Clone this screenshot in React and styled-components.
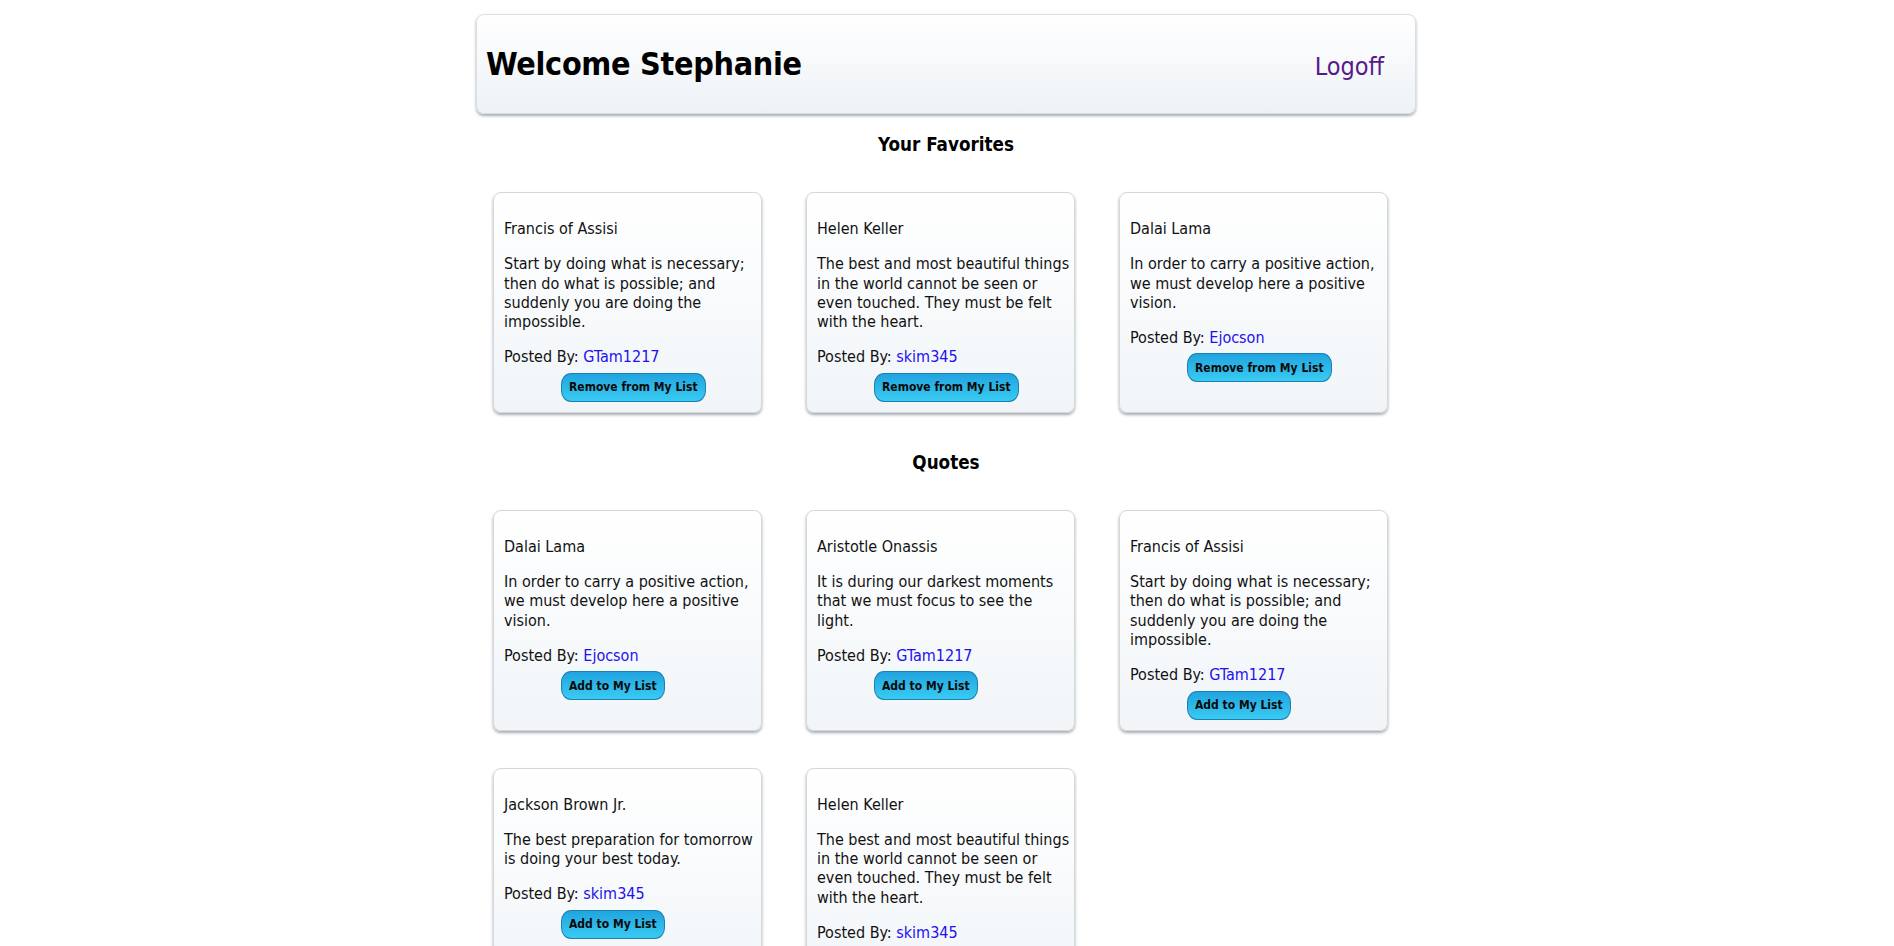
import React from "react";
import styled, { createGlobalStyle } from "styled-components";

const GlobalStyle = createGlobalStyle`
  body {
    margin: 0;
    background: #ffffff;
    color: #000000;
    font-family: "DejaVu Sans Condensed", "DejaVu Sans", sans-serif;
    font-stretch: condensed;
  }
`;

const Page = styled.div`
  width: 940px;
  margin: 0 auto;
  padding: 14px 2px 0 0;
`;

const Header = styled.header`
  box-sizing: border-box;
  height: 100px;
  display: flex;
  align-items: center;
  justify-content: space-between;
  padding: 0 31px 0 9px;
  border: 1px solid #d9dee3;
  border-radius: 8px;
  background: linear-gradient(#ffffff, #eef2f6);
  box-shadow: 0 2px 3px rgba(60, 70, 80, 0.45);

  h1 {
    margin: 0;
    font-size: 32px;
    font-weight: bold;
    letter-spacing: -0.3px;
  }
`;

const Logoff = styled.a`
  color: #551a8b;
  font-size: 25px;
  text-decoration: none;
  margin-top: 4px;
`;

const SectionTitle = styled.h3`
  margin: ${(props) => props.$top}px 0 36px;
  text-align: center;
  font-size: 18.7px;
  line-height: 22px;
  font-weight: bold;
`;

const Grid = styled.div`
  display: grid;
  grid-template-columns: repeat(3, 269px);
  column-gap: 44px;
  row-gap: 37px;
  padding-left: 17px;
`;

const Card = styled.div`
  box-sizing: border-box;
  width: 269px;
  padding: 10px 4px 10px 10px;
  border: 1px solid #d3d8dd;
  border-radius: 8px;
  background: linear-gradient(#ffffff, #f1f5f8);
  box-shadow: 0 2px 3px rgba(60, 70, 80, 0.45);
  font-size: 16px;
  line-height: 19.3px;
  color: #111;

  p {
    margin: 16px 0;
  }
  p.posted {
    margin-bottom: 6px;
  }
`;

const User = styled.a`
  color: #2211ee;
  text-decoration: none;
`;

const ListButton = styled.button`
  display: block;
  height: 29px;
  margin-left: 57px;
  padding: 0 7px;
  border: 1px solid #1a7fb3;
  border-radius: 10px / 11px;
  background: linear-gradient(#21a4df, #39cbf2);
  color: #0a0a0a;
  font-family: inherit;
  font-stretch: condensed;
  font-size: 12px;
  font-weight: bold;
  cursor: pointer;
`;

const favorites = [
  {
    author: "Francis of Assisi",
    text: "Start by doing what is necessary; then do what is possible; and suddenly you are doing the impossible.",
    user: "GTam1217",
  },
  {
    author: "Helen Keller",
    text: "The best and most beautiful things in the world cannot be seen or even touched. They must be felt with the heart.",
    user: "skim345",
  },
  {
    author: "Dalai Lama",
    text: "In order to carry a positive action, we must develop here a positive vision.",
    user: "Ejocson",
  },
];

const quotes = [
  favorites[2],
  {
    author: "Aristotle Onassis",
    text: "It is during our darkest moments that we must focus to see the light.",
    user: "GTam1217",
  },
  favorites[0],
  {
    author: "Jackson Brown Jr.",
    text: "The best preparation for tomorrow is doing your best today.",
    user: "skim345",
  },
  favorites[1],
];

function QuoteCard({ quote, label }) {
  return (
    <Card>
      <p>{quote.author}</p>
      <p>{quote.text}</p>
      <p className="posted">
        Posted By: <User href="#">{quote.user}</User>
      </p>
      <ListButton>{label}</ListButton>
    </Card>
  );
}

export default function App() {
  return (
    <>
      <GlobalStyle />
      <Page>
        <Header>
          <h1>Welcome Stephanie</h1>
          <Logoff href="#">Logoff</Logoff>
        </Header>

        <SectionTitle $top={20}>Your Favorites</SectionTitle>
        <Grid>
          {favorites.map((q, i) => (
            <QuoteCard key={i} quote={q} label="Remove from My List" />
          ))}
        </Grid>

        <SectionTitle $top={39}>Quotes</SectionTitle>
        <Grid>
          {quotes.map((q, i) => (
            <QuoteCard key={i} quote={q} label="Add to My List" />
          ))}
        </Grid>
      </Page>
    </>
  );
}
